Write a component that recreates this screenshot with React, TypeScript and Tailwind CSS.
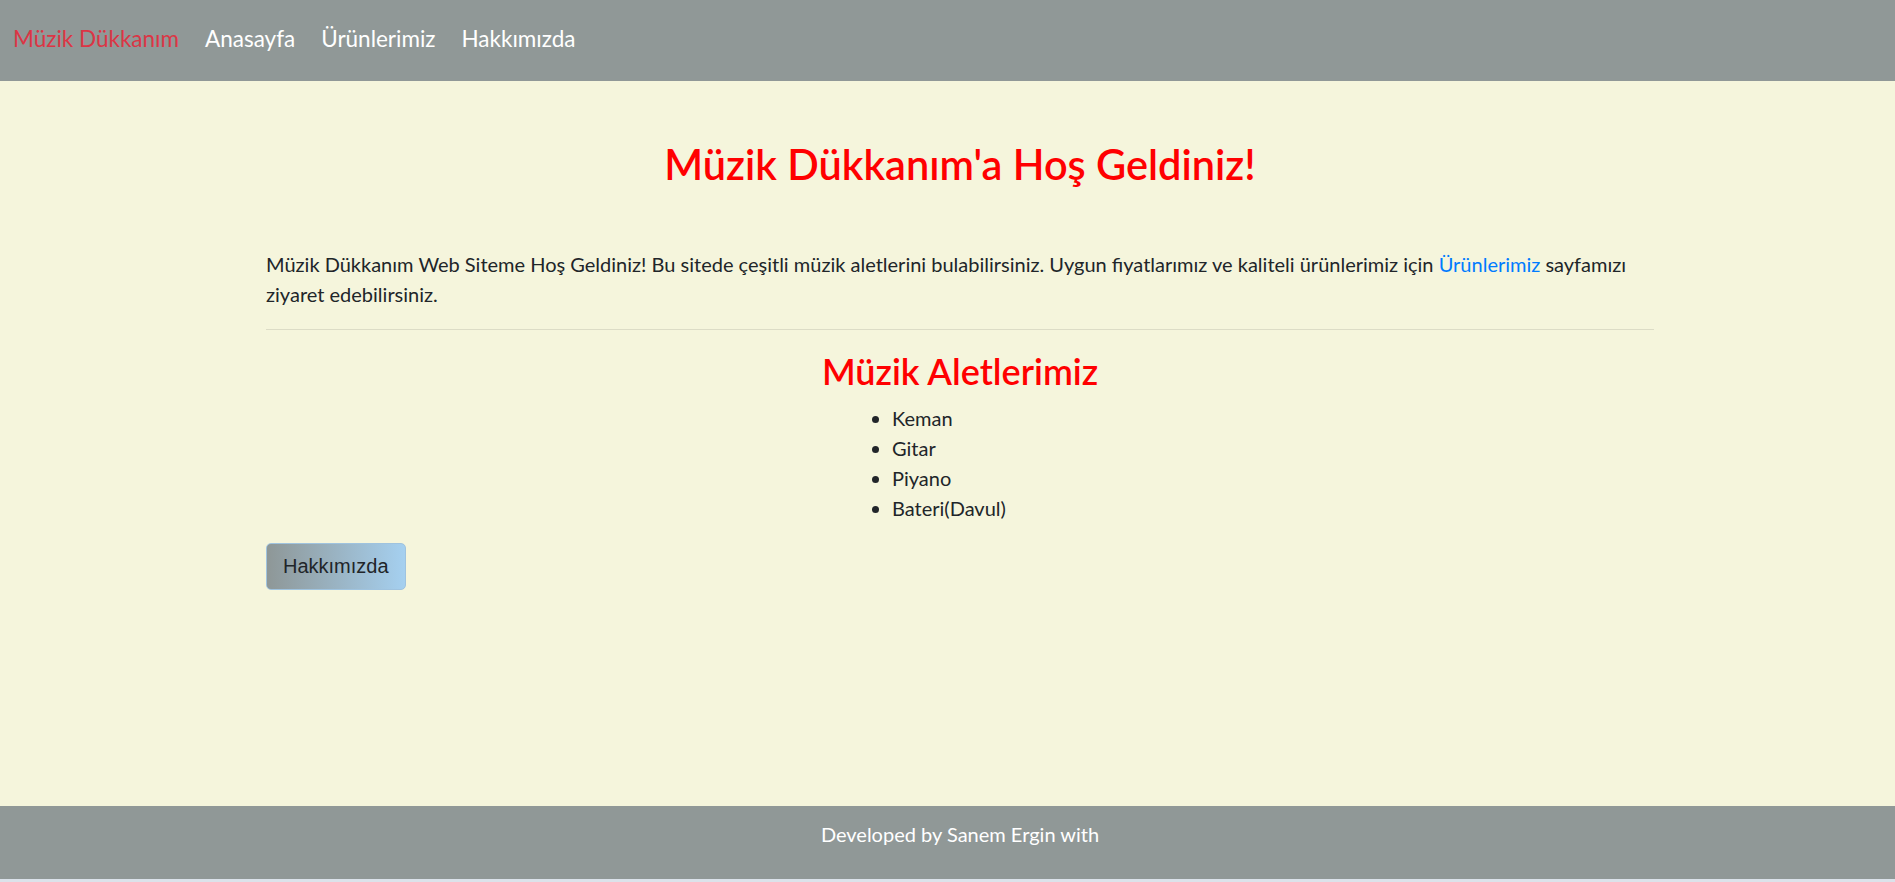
const navLinks = ['Anasayfa', 'Ürünlerimiz', 'Hakkımızda']
const instruments = ['Keman', 'Gitar', 'Piyano', 'Bateri(Davul)']

export default function App() {
  return (
    <div className="font-['Lato','Liberation_Sans',sans-serif] text-[#212529]">
      {/* Navbar */}
      <nav className="flex h-[81px] items-center gap-[26px] bg-[#909897] pb-[4px] pl-[13px] text-[22.5px]">
        <a href="#" className="text-[#dc3545]">Müzik Dükkanım</a>
        {navLinks.map(l => (
          <a key={l} href="#" className="text-white">{l}</a>
        ))}
      </nav>

      {/* İçerik */}
      <main className="h-[725px] bg-[#f5f5dc] pt-[59px]">
        <div className="ml-[266px] w-[1388px]">
          <h1 className="mb-[59px] text-center text-[41.5px] font-semibold leading-[1.2] text-[#ff0000]">
            Müzik Dükkanım'a Hoş Geldiniz!
          </h1>
          <p className="mb-[20px] text-[20px] leading-[30px]">
            Müzik Dükkanım Web Siteme Hoş Geldiniz! Bu sitede çeşitli müzik aletlerini bulabilirsiniz. Uygun fiyatlarımız ve kaliteli ürünlerimiz için{' '}
            <a href="#" className="text-[#007bff]">Ürünlerimiz</a> sayfamızı ziyaret edebilirsiniz.
          </p>
          <hr className="mb-[20px] border-t border-[#dcdcc6]" />
          <h2 className="mb-[10px] text-center text-[36px] font-semibold leading-[1.2] text-[#ff0000]">
            Müzik Aletlerimiz
          </h2>
          <ul className="mb-[20px] list-disc pl-[626px] text-[20px] leading-[30px]">
            {instruments.map(i => (
              <li key={i}>{i}</li>
            ))}
          </ul>
          <button className="rounded-[5px] border border-[#9fc3df] bg-gradient-to-r from-[#8e9797] to-[#a5d0f0] px-[16px] py-[11px] font-['Liberation_Sans',Arial,sans-serif] text-[20px] leading-[23px] text-[#212529]">
            Hakkımızda
          </button>
        </div>
      </main>

      {/* Footer */}
      <footer className="h-[73px] bg-[#909897] pl-[25px] pt-[13px] text-center text-[20px] leading-[30px] text-white">
        Developed by Sanem Ergin with
      </footer>
      <div className="h-[3px] bg-[#dbe2ea]" />
    </div>
  )
}
